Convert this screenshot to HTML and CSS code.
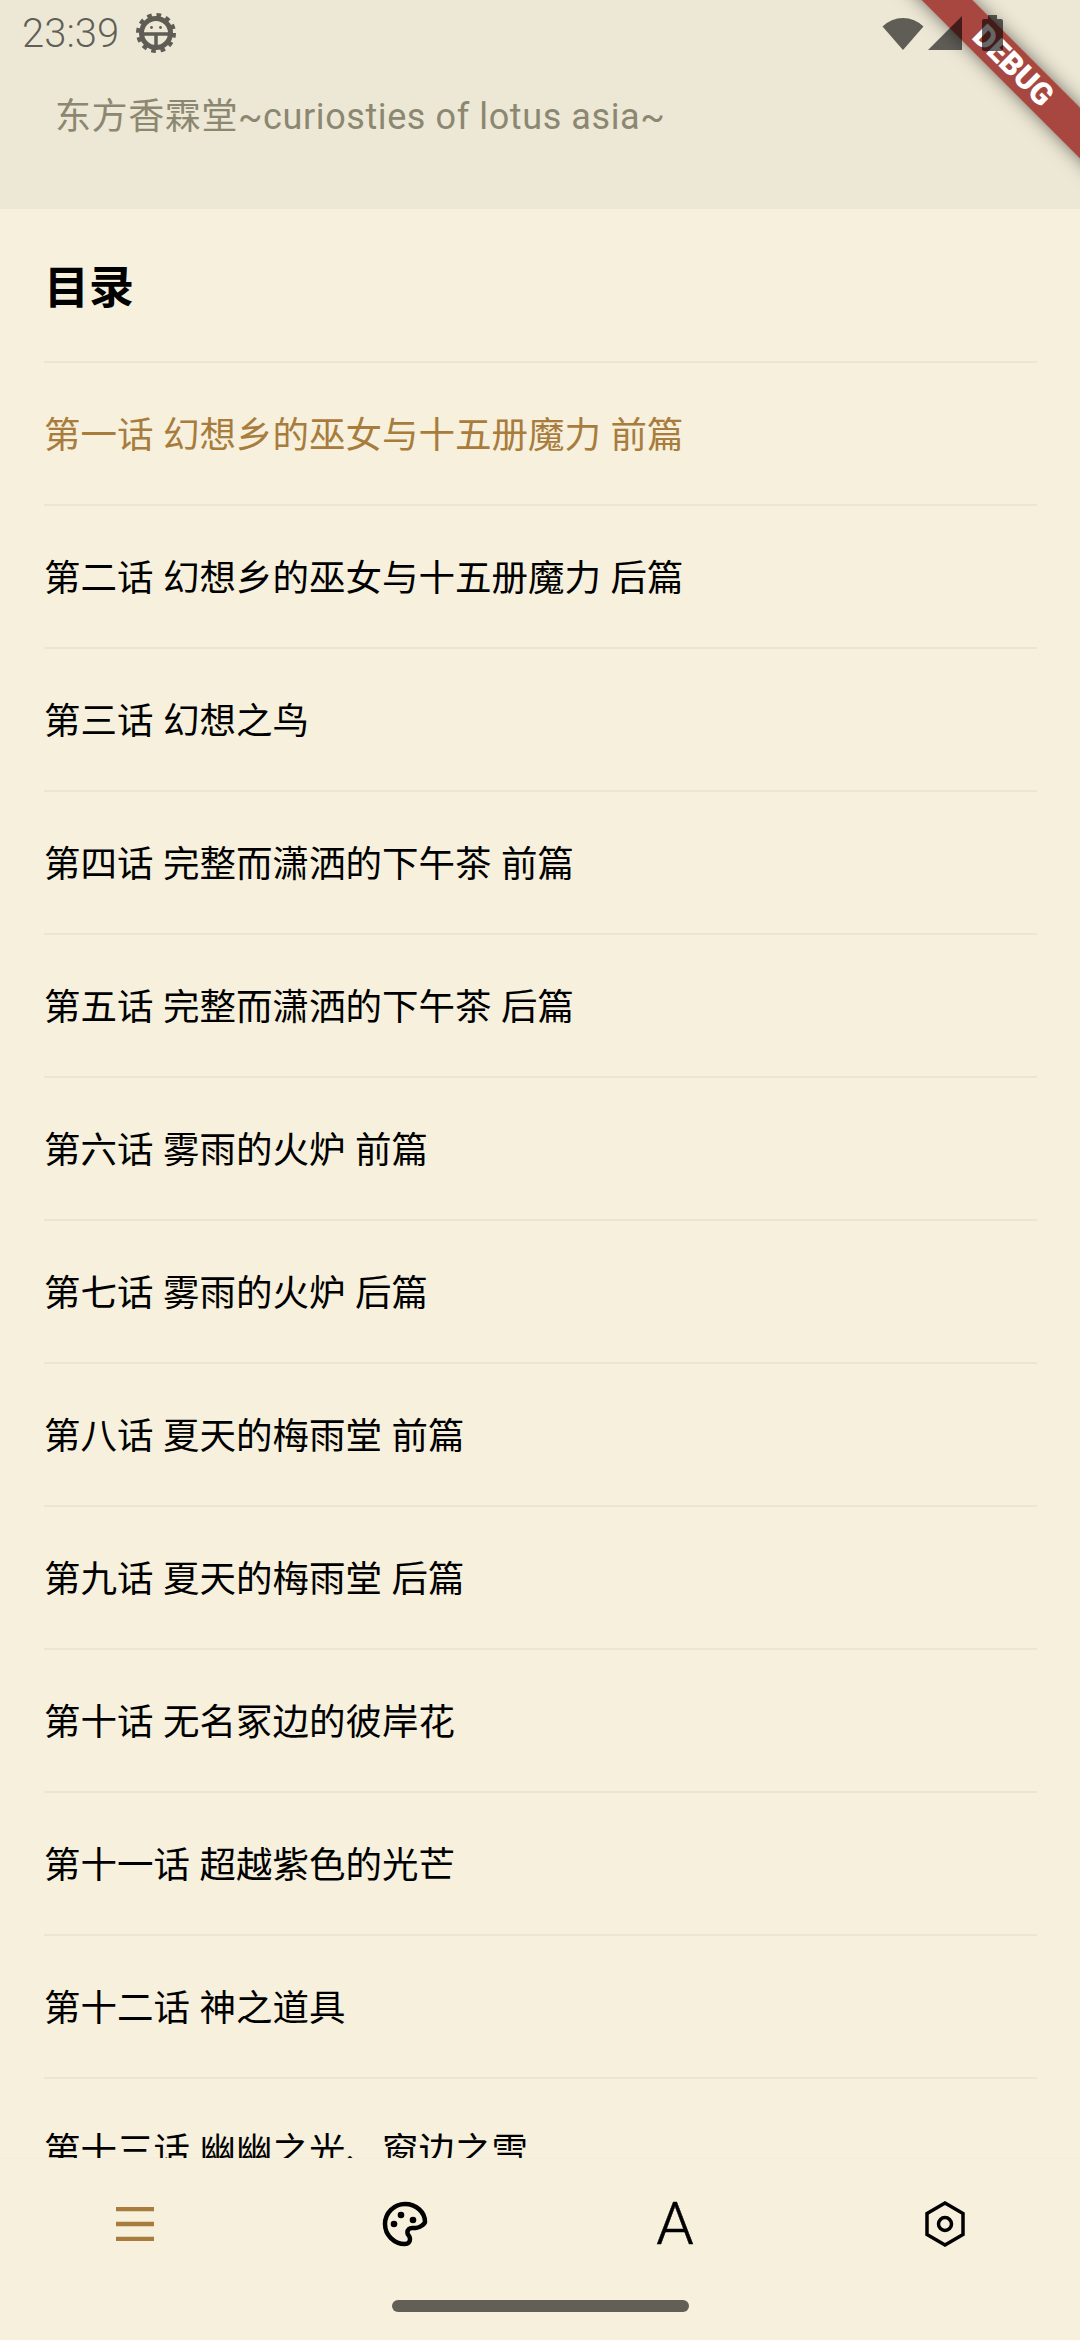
FILE: index.html
```html
<!DOCTYPE html>
<html lang="zh-CN">
<head>
    <meta charset="UTF-8">
    <meta name="viewport" content="width=device-width, initial-scale=1.0">
    <title>目录</title>
    <link rel="stylesheet" href="styles.css">
</head>
<body>

<div class="page">
    <!-- clip box keeps the rotated ribbon inside the frame -->
    <div class="banner-clip">
        <div class="debug-banner">DEBUG</div>
    </div>

    <header class="top-bar">
        <div class="status-bar">
            <div class="status-left">
                <span class="status-time">23:39</span>
                <svg class="gear-icon" viewBox="0 0 40 40">
                    <circle cx="20" cy="20" r="14.500" fill="none" stroke="#000" stroke-width="5"/>
                    <circle cx="20" cy="20" r="17.500" fill="none" stroke="#000" stroke-width="5" stroke-dasharray="4.500 4.660"/>
                    <path d="M6 21h28M20 21v13" fill="none" stroke="#000" stroke-width="3.500"/>
                    <circle cx="15.500" cy="14.500" r="1.400" fill="#000"/>
                    <circle cx="24.500" cy="14.500" r="1.400" fill="#000"/>
                </svg>
            </div>
            <div class="status-right">
                <svg class="wifi-icon" viewBox="0 0 42 34"><path d="M0.500 10.500A29 29 0 0 1 41.500 10.500L21 34z"/></svg>
                <svg class="signal-icon" viewBox="0 0 34 34"><path d="M34 0V34H0z"/></svg>
                <svg class="battery-icon" viewBox="0 0 21 36"><path d="M6 0h9v4h4a2 2 0 0 1 2 2v28a2 2 0 0 1-2 2H2a2 2 0 0 1-2-2V6a2 2 0 0 1 2-2h4z"/></svg>
            </div>
        </div>
        <h1 class="app-title">东方香霖堂~curiosties of lotus asia~</h1>
    </header>

    <main class="contents">
        <h2 class="contents-title">目录</h2>
        <ul class="chapter-list">
            <li class="chapter chapter-active">第一话 幻想乡的巫女与十五册魔力 前篇</li>
            <li class="chapter">第二话 幻想乡的巫女与十五册魔力 后篇</li>
            <li class="chapter">第三话 幻想之鸟</li>
            <li class="chapter">第四话 完整而潇洒的下午茶 前篇</li>
            <li class="chapter">第五话 完整而潇洒的下午茶 后篇</li>
            <li class="chapter">第六话 雾雨的火炉 前篇</li>
            <li class="chapter">第七话 雾雨的火炉 后篇</li>
            <li class="chapter">第八话 夏天的梅雨堂 前篇</li>
            <li class="chapter">第九话 夏天的梅雨堂 后篇</li>
            <li class="chapter">第十话 无名冢边的彼岸花</li>
            <li class="chapter">第十一话 超越紫色的光芒</li>
            <li class="chapter">第十二话 神之道具</li>
            <li class="chapter">第十三话 幽幽之光、窗边之雪</li>
        </ul>
    </main>

    <nav class="bottom-nav">
        <div class="nav-items">
            <div class="nav-item">
                <svg class="menu-icon" viewBox="0 0 38 34"><path d="M0 2h38M0 17h38M0 32h38" fill="none" stroke="#a87c3c" stroke-width="4.500"/></svg>
            </div>
            <div class="nav-item">
                <svg class="nav-icon" viewBox="0 0 48 48"><path d="M24 4C13 4 4 13 4 24s9 20 20 20c3 0 5-2 5-5 0-1.300-.5-2.500-1.300-3.400-.8-.9-1.300-2-1.300-3.200 0-2.600 2-4.400 4.600-4.400h4C39 28 44 23.500 44 22 44 12 35 4 24 4z" fill="none" stroke="#000" stroke-width="4.500" stroke-linejoin="round"/><circle cx="13" cy="24" r="3.300" fill="#000"/><circle cx="20" cy="15" r="3.300" fill="#000"/><circle cx="32" cy="20" r="3.300" fill="#000"/></svg>
            </div>
            <div class="nav-item"><span class="font-icon">A</span></div>
            <div class="nav-item">
                <svg class="nav-icon" viewBox="0 0 48 48"><path d="M24 3 42 13.500V34.500L24 45 6 34.500V13.500z" fill="none" stroke="#000" stroke-width="3.500"/><circle cx="24" cy="24" r="6.500" fill="none" stroke="#000" stroke-width="3.500"/></svg>
            </div>
        </div>
        <div class="home-indicator"></div>
    </nav>
</div>

</body>
</html>
```

FILE: styles.css
```css
/* Global styles */
* {
    box-sizing: border-box;
}

body {
    margin: 0;
    background: #f6f0dd;
    color: #000;
    font-family: Roboto, "Noto Sans CJK SC", sans-serif;
}

.page {
    width: 1080px;
    height: 2340px;
    display: flex;
    flex-direction: column;
    position: relative;
    overflow: hidden;
}

/* Header */
.top-bar {
    height: 209px;
    background: #ede8d5;
    flex-shrink: 0;
}

/* status bar sits on top of the ribbon, the ribbon shows through it */
.status-bar {
    height: 66px;
    padding: 0 77px 0 22px;
    display: flex;
    justify-content: space-between;
    align-items: center;
    position: relative;
    z-index: 2;
    color: rgba(0, 0, 0, 0.6);
}

.status-left {
    display: flex;
    align-items: center;
    gap: 17px;
}

.status-time {
    font-size: 40px;
    font-weight: 300;
}

.gear-icon {
    width: 40px;
    height: 40px;
    opacity: 0.6;
}

.status-right {
    display: flex;
    align-items: center;
}

.status-right svg {
    fill: rgba(0, 0, 0, 0.6);
}

.wifi-icon {
    width: 42px;
    height: 34px;
    margin-right: 4px;
}

.signal-icon {
    width: 34px;
    height: 34px;
    margin-right: 20px;
}

.battery-icon {
    width: 21px;
    height: 36px;
}

.app-title {
    margin: 0;
    padding: 30px 0 0 55px;
    font-size: 36px;
    line-height: 42px;
    font-weight: 400;
    letter-spacing: 0.6px;
    color: #8b8771;
}

/* Contents list */
.contents {
    flex: 1;
    min-height: 0;
    overflow: hidden;
    padding: 0 43px 0 44px;
}

.contents-title {
    margin: 0;
    height: 154px;
    padding-bottom: 2px;
    display: flex;
    align-items: center;
    font-size: 45px;
    font-weight: 700;
    border-bottom: 2px solid #ebe6d3;
}

.chapter-list {
    margin: 0;
    padding: 0;
    list-style: none;
}

.chapter {
    height: 143px;
    padding-bottom: 3px;
    display: flex;
    align-items: center;
    font-size: 36.500px;
    word-spacing: 0.500px;
    border-bottom: 2px solid #ebe6d3;
}

.chapter-active {
    color: #a87c3c;
}

/* Bottom nav */
.bottom-nav {
    height: 182px;
    flex-shrink: 0;
    border-top: 1px solid #f3eddb;
}

.nav-items {
    height: 141px;
    padding-bottom: 12px;
    display: grid;
    grid-template-columns: repeat(4, 1fr);
}

.nav-item {
    display: flex;
    justify-content: center;
    align-items: center;
}

.nav-icon {
    width: 48px;
    height: 48px;
}

.menu-icon {
    width: 38px;
    height: 34px;
}

.font-icon {
    font-size: 60px;
    font-weight: 300;
    line-height: 48px;
    -webkit-text-stroke: 0.5px #000;
}

.home-indicator {
    width: 297px;
    height: 12px;
    margin: 0 auto;
    border-radius: 6px;
    background: #625f56;
}

/* Debug ribbon */
.banner-clip {
    position: absolute;
    top: 0;
    right: 0;
    width: 240px;
    height: 240px;
    overflow: hidden;
    z-index: 1;
}

.debug-banner {
    position: absolute;
    top: 48px;
    left: -27px;
    width: 400px;
    height: 36px;
    transform: rotate(45deg);
    background: rgba(150, 30, 25, 0.8);
    box-shadow: 0 0 18px rgba(0, 0, 0, 0.5);
    color: #fff;
    font-size: 31px;
    font-weight: 900;
    line-height: 36px;
    text-align: center;
}
```
